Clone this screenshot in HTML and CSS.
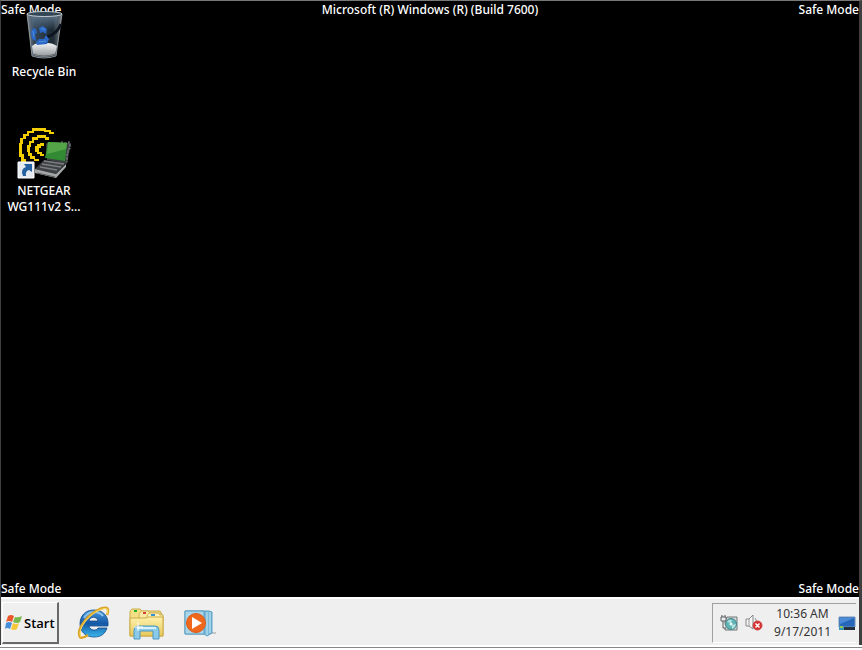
FILE: index.html
```html
<!DOCTYPE html>
<html lang="en">
<head>
<meta charset="utf-8">
<title>Safe Mode</title>
<link rel="stylesheet" href="styles.css">
</head>
<body>
<div class="screen">
  <main class="desktop">
    <header class="banner">
      <span>Safe Mode</span>
      <span>Microsoft (R) Windows (R) (Build 7600)</span>
      <span class="end">Safe Mode</span>
    </header>
    <nav class="shortcuts" aria-label="Desktop">
      <a class="shortcut" href="#bin">
        <svg width="50" height="50" viewBox="0 0 50 50" aria-hidden="true">
          <defs>
            <linearGradient id="glass"><stop offset="0" stop-color="#7f8890"/><stop offset=".2" stop-color="#35485a"/><stop offset=".75" stop-color="#1c2832"/><stop offset="1" stop-color="#7c858d"/></linearGradient>
            <linearGradient id="paper" x2="0" y2="1"><stop offset="0" stop-color="#f4f5f5"/><stop offset="1" stop-color="#8f9498"/></linearGradient>
            <linearGradient id="inside" x2="0" y2="1"><stop offset="0" stop-color="#5b7388"/><stop offset="1" stop-color="#5b7388" stop-opacity="0"/></linearGradient>
          </defs>
          <path d="M8 4 13 46Q25 50 37 46L43 4Z" fill="url(#glass)" stroke="#a5adb4" stroke-width=".8"/>
          <path d="M12 5H39L37 20H14Z" fill="url(#inside)"/>
          <path d="M13 36Q17 32 24 34Q31 31 38 36L36 45Q25 49 14 45Z" fill="url(#paper)"/>
          <path d="M14 44Q25 48 36 44" fill="none" stroke="#62686d"/>
          <path d="M42 14Q38 24 28 27" fill="none" stroke="#0d1520" stroke-width="3"/>
          <path d="M12 22 14 18 17 19 18 23 16 24 17 31 13 29ZM20 18 24 16 28 19 27 24 24 22 21 23ZM17 32 20 29 25 29 27 25 30 29 28 34 18 35Z" fill="#2b68c6"/>
          <path d="M14 21 15 27M22 18 26 20M20 32 27 31" stroke="#5590de"/>
          <ellipse cx="25.500" cy="4" rx="17.500" ry="2.500" fill="#334655" stroke="#c3cbd1"/>
        </svg>
        <span>Recycle Bin</span>
      </a>
      <a class="shortcut" href="#netgear">
        <svg width="54" height="52" viewBox="0 0 54 52" aria-hidden="true">
          <g fill="#f4cf00" shape-rendering="crispEdges">
            <path d="M15 1H29V3H34V5H37V7H32V5H27V4H17V6H12V9H9V12H6V17H5V27H7V32H9V35H4V30H2V16H3V11H6V7H10V4H15Z"/>
            <path d="M20 8H29V10H32V13H28V11H21V13H17V16H14V20H13V26H15V29H18V32H22V34H17V32H13V29H11V25H10V18H12V14H15V10H20Z"/>
            <path d="M23 16H27V19H24V21H22V25H25V27H27V29H23V27H20V25H18V19H20V17H23Z"/>
          </g>
          <path d="M29 17 31 15 54 16 50 37 30 33Z" fill="#3c4042"/>
          <path d="M45 14V16H52V14M53 17V22H51V27H50V35" fill="none" stroke="#80868a" stroke-dasharray="3 1"/>
          <path d="M31 15 50 16 48 34 28 31Z" fill="#328b32"/>
          <path d="M31 15 50 16 49 22 30 27Z" fill="#54a547"/>
          <path d="M27 33 49 36 39 47 18 42Z" fill="#3e4144"/>
          <path d="M27 34 47 37M25 37 44 40M23 40 40 43" stroke="#7a7e80" stroke-width="1.500"/>
          <path d="M18 42 39 47 49 37V40L39 51 18 46Z" fill="#a4a7a8"/>
          <path d="M20 46 38 50" stroke="#55595b"/>
          <path d="M1 35H17V51H1Z" fill="#e5eaf0" stroke="#fff"/>
          <path d="M6 49Q3 42 9 40L7 37H15V45L12 43Q8 44 9 49Z" fill="#23609f"/>
        </svg>
        <span>NETGEAR<br>WG111v2 S...</span>
      </a>
    </nav>
    <footer class="banner bottom"><span>Safe Mode</span><span class="end">Safe Mode</span></footer>
  </main>
  <div class="taskbar">
    <button class="start" type="button">
      <svg width="17" height="17" viewBox="0 0 17 17" aria-hidden="true">
        <path d="M3 2Q6 0 9 2L7 8Q4 6 1 8Z" fill="#e8582c"/><path d="M10 3Q13 4 17 2L15 8Q12 10 8 8Z" fill="#79b84a"/><path d="M1 9Q4 7 7 9L5 15Q2 13 0 15Z" fill="#478edb"/><path d="M8 9Q11 11 14 9L12 15Q9 17 6 15Z" fill="#f8c83b"/>
      </svg>
      Start
    </button>
    <div class="pinned">
      <button type="button" aria-label="Internet Explorer">
        <svg width="34" height="34" viewBox="0 0 34 34" aria-hidden="true">
          <defs><linearGradient id="blue" x2="0" y2="1"><stop offset="0" stop-color="#4b9ade"/><stop offset=".5" stop-color="#1558a6"/><stop offset="1" stop-color="#39b7ec"/></linearGradient></defs>
          <path fill-rule="evenodd" d="M17 4C8 4 3 10 3 18S9 31 17 31C24 31 28 28 30 22H21C20 25 13 25 12 20H31C32 10 26 4 17 4ZM12 15C13 10 20 10 21 15Z" fill="url(#blue)" stroke="#124a8c" stroke-width=".8"/>
          <path d="M7 12Q11 6 17 6Q23 6 26 10" fill="none" stroke="#8bc4ef" stroke-width="2"/>
          <path d="M30 9C34-1 26 1 19 5C9 11-1 24 3 31Q5 33 11 29" fill="none" stroke="#dba52a" stroke-width="2.500"/>
          <path d="M30 8C33 0 26 2 19 6C9 12 0 25 4 31" fill="none" stroke="#ffe066" stroke-width="1"/>
        </svg>
      </button>
      <button type="button" aria-label="Windows Explorer">
        <svg width="36" height="34" viewBox="0 0 36 34" aria-hidden="true">
          <defs><linearGradient id="folder" x2="0" y2="1"><stop offset="0" stop-color="#fff2ad"/><stop offset="1" stop-color="#e7c75a"/></linearGradient></defs>
          <path d="M1 5 3 3H11L13 5H31L34 10V30H1Z" fill="#f4df87" stroke="#c9ac4b"/>
          <path d="M5 4H8V6H5Z" fill="#18b427"/>
          <path d="M10 8 12 5H19L21 7H32V13H10Z" fill="#f9e9a4" stroke="#cfb45a"/><path d="M14 6H17V8H14Z" fill="#d54437"/>
          <path d="M18 10 20 7H29L31 9H34V14H18Z" fill="#fff1b5" stroke="#cfb45a"/><path d="M22 8H26V10H22Z" fill="#3594d2"/>
          <path d="M1 12H17L19 11H34V30H1Z" fill="url(#folder)" stroke="#caaa42"/>
          <path d="M5 33V24Q5 20 9 20H26Q30 20 30 24V33H24V25H11V33Z" fill="#8bcbe9" stroke="#4b98c3"/>
          <path d="M8 22H27" stroke="#d8f2fc" stroke-width="2"/><path d="M9 16V25M5 21H14" stroke="#fff"/>
        </svg>
      </button>
      <button type="button" aria-label="Windows Media Player">
        <svg width="34" height="34" viewBox="0 0 34 34" aria-hidden="true">
          <path d="M25 27H33" stroke="#c4c7c8" stroke-width="2"/>
          <path d="M2 5H26L29 6V27L24 30 21 28H2Z" fill="#79b9da" stroke="#5b9fc4"/>
          <path d="M2 5H21V28H2Z" fill="#a9d6eb" stroke="#5b9bbd"/><path d="M24 6V29M27 6V27" stroke="#c8e8f4"/>
          <circle cx="13" cy="17" r="9.500" fill="#ef681c" stroke="#dc5b19"/><path d="M9 11V23L19 17Z" fill="#fff"/>
        </svg>
      </button>
    </div>
    <div class="tray">
      <button type="button" aria-label="Safely remove hardware">
        <svg width="18" height="18" viewBox="0 0 18 18" aria-hidden="true">
          <path d="M7 3H17V16H5V7Z" fill="#d5d9da" stroke="#707679"/>
          <circle cx="11" cy="10" r="5.500" fill="#5fb4b5" stroke="#4a8588"/><path d="M7 8Q9 5 12 6L11 9ZM12 11 16 10Q15 14 12 15Z" fill="#b5e4e3"/><circle cx="11" cy="10" r="1.500" fill="#eefafa"/>
          <path d="M1 3H6V7H1ZM2 1V3M5 1V3M3 7V14H6" fill="#eee" stroke="#595c5e"/>
        </svg>
      </button>
      <button type="button" aria-label="Volume unavailable">
        <svg width="18" height="18" viewBox="0 0 18 18" aria-hidden="true"><path d="M1 5H4L8 1V15L4 12H1Z" fill="#f5f5f5" stroke="#85898c"/><path d="M4 5V12M10 4Q12 6 11 8" fill="none" stroke="#999"/><circle cx="12.500" cy="11.500" r="4.500" fill="#d93131" stroke="#c94646"/><path d="M10.500 9.500 14.500 13.500M14.500 9.500 10.500 13.500" stroke="#fff" stroke-width="1.500"/></svg>
      </button>
      <div class="clock"><time>10:36 AM</time><time>9/17/2011</time></div>
      <button type="button" aria-label="Show desktop">
        <svg width="18" height="16" viewBox="0 0 18 16" aria-hidden="true"><path d="M1 2H17V12H1Z" fill="#2866ba" stroke="#7096bd"/><path d="M2 3H16L2 9Z" fill="#4c8bd7"/><path d="M1 12H17V15H1Z" fill="#26303c"/><path d="M1 12H6V15H1Z" fill="#3795ba"/><path d="M2 12H5" stroke="#8ccc52" stroke-width="2"/></svg>
      </button>
    </div>
  </div>
</div>
<div class="rule"></div>
</body>
</html>
```
FILE: styles.css
```css
* { box-sizing: border-box; }

body {
  display: flex;
  flex-direction: column;
  min-height: 100vh;
  margin: 0;
  background: #fff;
  font: 12px/16px "Noto Sans", "Open Sans", sans-serif;
}

.screen {
  display: flex;
  flex: 1;
  flex-direction: column;
  border: solid #3f3f3f;
  border-width: 1px 3px 0 1px;
  border-top-color: #777;
}

.desktop {
  display: flex;
  flex: 1;
  flex-direction: column;
  background: #000;
  color: #fff;
  font-weight: 500;
}

.banner {
  display: grid;
  grid-template-columns: 1fr auto 1fr;
  line-height: 18px;
}

.bottom {
  grid-template-columns: 1fr 1fr;
  margin-top: auto;
  line-height: 16px;
}

.end { text-align: right; }

.shortcuts {
  display: flex;
  flex-direction: column;
  align-items: flex-start;
  gap: 47px;
  margin-top: -9px;
}

.shortcut {
  display: flex;
  flex-direction: column;
  align-items: center;
  gap: 4px;
  width: 86px;
  color: inherit;
  text-align: center;
  text-decoration: none;
}

.taskbar {
  display: flex;
  align-items: center;
  height: 48px;
  padding: 4px 3px 2px 1px;
  border-top: 2px solid #fff;
  background: #efeff0;
}

button {
  display: flex;
  align-items: center;
  padding: 0;
  border: 0;
  background: none;
  color: #000;
}

.start {
  gap: 2px;
  height: 42px;
  padding: 0 2px;
  border: solid #fff;
  border-width: 1px 2px 2px 1px;
  border-right-color: #696969;
  border-bottom-color: #696969;
  font: 600 13px/18px "Open Sans", sans-serif;
}

.pinned {
  display: flex;
  gap: 18px;
  margin-left: 18px;
}

.tray {
  display: flex;
  align-items: center;
  gap: 7px;
  height: 40px;
  margin-left: auto;
  padding-left: 7px;
  border: solid #a0a0a0;
  border-width: 1px 0 0 1px;
  border-bottom: 1px solid #fff;
}

.clock {
  display: flex;
  flex-direction: column;
  align-items: center;
  margin-left: 4px;
  color: #333;
  line-height: 18px;
}

.rule {
  height: 5px;
  border-top: 2px solid #fff;
  background: linear-gradient(#888 1px, #fff 1px);
}
```
